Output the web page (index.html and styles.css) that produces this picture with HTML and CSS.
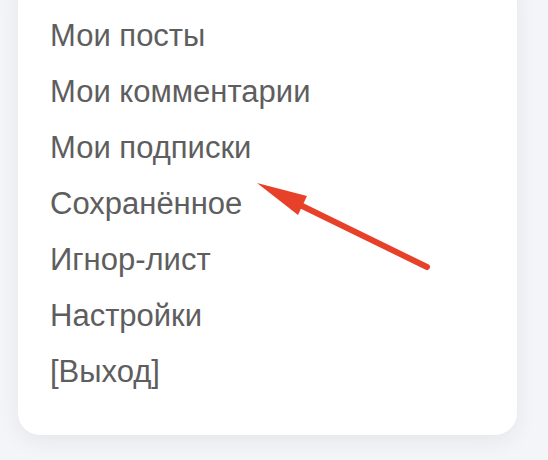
FILE: index.html
```html
<!DOCTYPE html>
<html lang="ru">
<head>
<meta charset="utf-8">
<link rel="stylesheet" href="styles.css">
</head>
<body>
<div class="page">
  <nav class="card">
    <ul class="menu">
      <li><a href="#">Мои посты</a></li>
      <li><a href="#">Мои комментарии</a></li>
      <li><a href="#">Мои подписки</a></li>
      <li><a href="#">Сохранённое</a></li>
      <li><a href="#">Игнор-лист</a></li>
      <li><a href="#">Настройки</a></li>
      <li><a href="#">[Выход]</a></li>
    </ul>
  </nav>
  <svg class="arrow" width="548" height="460" viewBox="0 0 548 460">
    <line x1="427" y1="297" x2="296" y2="233" stroke="#e8412a" stroke-width="6" stroke-linecap="round"/>
    <polygon points="257,213 307,226 298,245" fill="#e8412a"/>
  </svg>
</div>
</body>
</html>
```

FILE: styles.css
```css
html, body {
  margin: 0;
  padding: 0;
}
body {
  background: #f4f5f8;
  font-family: "Liberation Sans", Arial, sans-serif;
  width: 548px;
  height: 460px;
  overflow: hidden;
}
.page {
  position: relative;
  width: 548px;
  height: 460px;
}
.card {
  margin: -30px 0 0 18px;
  width: 499px;
  box-sizing: border-box;
  background: #ffffff;
  border-radius: 22px;
  box-shadow: 0 6px 22px rgba(30, 40, 70, 0.07);
  padding: 38px 0 35px 32px;
}
.menu {
  list-style: none;
  margin: 0;
  padding: 0;
}
.menu li {
  font-size: 31px;
  line-height: 56px;
  height: 56px;
}
.menu a {
  color: #5e5e5e;
  text-decoration: none;
}
.arrow {
  position: absolute;
  left: 0;
  top: 0;
  pointer-events: none;
}
```
